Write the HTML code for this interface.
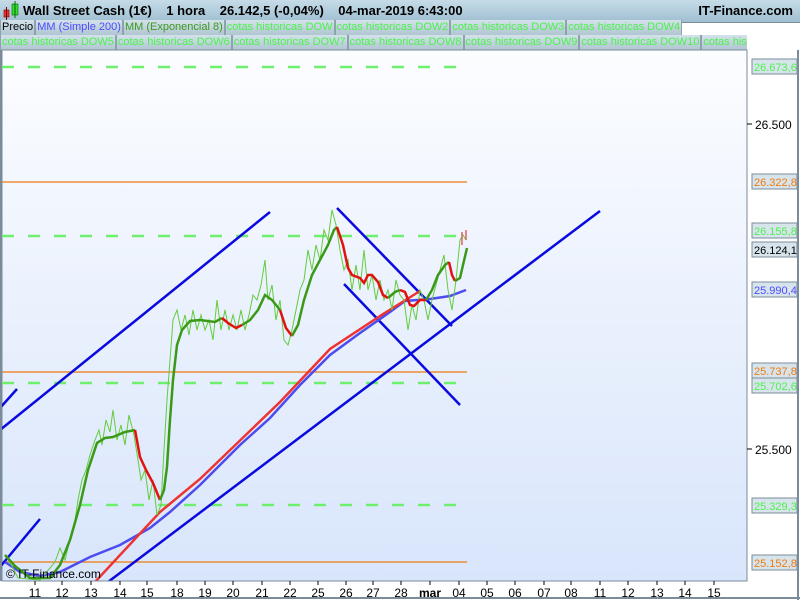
<!DOCTYPE html>
<html><head><meta charset="utf-8"><style>
body{margin:0;width:800px;height:600px;overflow:hidden;background:#fff;font-family:"Liberation Sans",sans-serif;}
.top{position:absolute;left:0;top:0;width:800px;height:22px;background:linear-gradient(#c6dce8,#9fbfd1);border-bottom:1px solid #7a8c99;}
.title{position:absolute;left:23px;top:3px;font-size:13px;font-weight:bold;color:#000;white-space:pre;}
.brand{position:absolute;right:7px;top:3px;font-size:13px;font-weight:bold;color:#000;}
.leg{position:absolute;height:15px;font-size:11px;line-height:15px;white-space:nowrap;overflow:hidden;}
.leg span{display:inline-block;background:linear-gradient(#d3e2ea,#b0c6d2);border:1px solid #8ea2ae;border-top:none;padding:0 1px;color:#4cf24c;}
</style></head><body>
<div class="top"><svg width="20" height="20" style="position:absolute;left:3px;top:1px"><rect x="1" y="9" width="5" height="7" fill="#e33" stroke="#700" stroke-width="0.6"/><line x1="3.5" y1="6" x2="3.5" y2="19" stroke="#700"/><rect x="9" y="3" width="6" height="11" fill="#3d3" stroke="#060" stroke-width="0.6"/><line x1="12" y1="0" x2="12" y2="17" stroke="#060"/></svg>
<div class="title">Wall Street Cash (1€)    1 hora    26.142,5 (-0,04%)    04-mar-2019 6:43:00</div><div class="brand">IT-Finance.com</div></div>
<div class="leg" style="left:0;top:20px;width:800px;"><span style="color:#000">Precio</span><span style="color:#4b4bff">MM (Simple 200)</span><span style="color:#3c9a1e">MM (Exponencial 8)</span><span>cotas historicas DOW</span><span>cotas historicas DOW2</span><span>cotas historicas DOW3</span><span>cotas historicas DOW4</span></div>
<div class="leg" style="left:0;top:35px;width:747px;"><span>cotas historicas DOW5</span><span>cotas historicas DOW6</span><span>cotas historicas DOW7</span><span>cotas historicas DOW8</span><span>cotas historicas DOW9</span><span>cotas historicas DOW10</span><span>cotas historicas DOW11</span></div>
<svg width="800" height="600" style="position:absolute;left:0;top:0" font-family="Liberation Sans, sans-serif" font-size="12">
<defs><linearGradient id="g" x1="0" y1="0" x2="0" y2="1"><stop offset="0" stop-color="#fcfdff"/><stop offset="1" stop-color="#d8e5fb"/></linearGradient><clipPath id="c"><rect x="2" y="50" width="745" height="531"/></clipPath></defs>
<rect x="2" y="50" width="745" height="531" fill="url(#g)" stroke="#7a8c99"/>
<line x1="0" y1="50" x2="0" y2="581" stroke="#7a8c99" stroke-width="3"/>
<g clip-path="url(#c)">
<g stroke-width="2.5">
<line x1="2" y1="67" x2="467" y2="67" stroke="#6ef06e" stroke-dasharray="12,14"/>
<line x1="2" y1="236" x2="467" y2="236" stroke="#6ef06e" stroke-dasharray="12,14"/>
<line x1="2" y1="383" x2="467" y2="383" stroke="#6ef06e" stroke-dasharray="12,14"/>
<line x1="2" y1="505" x2="467" y2="505" stroke="#6ef06e" stroke-dasharray="12,14"/>
</g>
<g stroke="#f07a10" stroke-width="1.2">
<line x1="2" y1="182" x2="467" y2="182"/><line x1="2" y1="372" x2="467" y2="372"/><line x1="2" y1="562" x2="467" y2="562"/></g>
<g stroke="#0a0ae0" stroke-width="2.5" fill="none">
<line x1="0" y1="430" x2="270" y2="212"/><line x1="0" y1="408" x2="17" y2="389"/>
<line x1="0" y1="567" x2="40" y2="519"/><line x1="108" y1="582" x2="600" y2="211"/>
<line x1="337" y1="208" x2="452" y2="326"/><line x1="344" y1="284" x2="460" y2="405"/>
</g>
<polyline fill="none" stroke="#4c4cf0" stroke-width="2.5" points="5,562 20,572 40,576 60,572 90,557 120,545 150,528 170,512 200,485 240,445 270,418 300,385 330,355 360,333 390,312 405,301 430,299 450,296 466,290"/>
<polyline fill="none" stroke="#e33" stroke-width="2.5" points="95,582 160,512 200,479 280,402 330,349 380,316 420,291"/>
<polyline fill="none" stroke="#62cc3c" stroke-width="1" points="5,555 12,566 18,578 40,580 55,562 60,548 65,560 70,540 75,520 78,500 82,480 86,470 90,455 95,440 99,430 102,445 106,420 110,432 113,410 117,440 121,425 125,445 129,415 134,435 138,460 141,480 145,470 149,500 153,480 157,515 161,505 164,450 167,400 170,360 173,320 177,310 181,330 185,315 189,335 193,310 197,330 201,315 205,330 209,320 213,340 217,300 221,330 225,310 229,330 233,315 237,330 241,310 245,330 249,315 253,295 257,300 261,285 265,260 268,300 272,285 276,320 280,300 284,340 288,345 292,330 296,310 300,290 304,280 308,250 312,270 316,245 320,260 324,230 328,240 332,210 336,225 340,250 344,270 348,260 352,290 356,265 360,290 364,250 368,290 372,275 376,300 380,280 384,300 388,290 392,310 396,280 400,295 404,300 408,330 412,305 416,320 420,290 424,300 428,320 432,300 436,285 440,270 444,255 448,290 452,310 456,280 460,240 463,235 466,240"/>
<polyline fill="none" stroke="#3a9a18" stroke-width="2.5" points="5,555 15,566 30,578 50,578 60,565 70,540 80,505 88,470 97,443 105,438 113,437 125,432 135,430"/>
<polyline fill="none" stroke="#e31010" stroke-width="2.5" points="135,430 140,457 146,470 153,483 160,500"/>
<polyline fill="none" stroke="#3a9a18" stroke-width="2.5" points="160,500 164,490 167,467 170,420 173,380 177,345 182,330 190,321 200,320 215,322 222,318"/>
<polyline fill="none" stroke="#e31010" stroke-width="2.5" points="222,318 228,323 236,328 242,325"/>
<polyline fill="none" stroke="#3a9a18" stroke-width="2.5" points="242,325 250,320 258,310 265,295 272,300 280,310"/>
<polyline fill="none" stroke="#e31010" stroke-width="2.5" points="280,310 286,328 292,336"/>
<polyline fill="none" stroke="#3a9a18" stroke-width="2.5" points="292,336 298,325 304,300 312,275 320,260 328,245 334,230 337,227"/>
<polyline fill="none" stroke="#e31010" stroke-width="2.5" points="337,227 343,245 348,268 352,275 360,278 364,283 368,275 372,275 378,282 383,295 388,298"/>
<polyline fill="none" stroke="#3a9a18" stroke-width="2.5" points="388,298 395,292 400,290"/>
<polyline fill="none" stroke="#e31010" stroke-width="2.5" points="400,290 405,292 410,305 414,306 420,300 426,300"/>
<polyline fill="none" stroke="#3a9a18" stroke-width="2.5" points="426,300 432,290 438,275 445,265 449,262"/>
<polyline fill="none" stroke="#e31010" stroke-width="2.5" points="449,262 452,275 455,281"/>
<polyline fill="none" stroke="#3a9a18" stroke-width="2.5" points="455,281 460,278 463,265 467,248"/>
<g stroke="#e06060" stroke-width="1.5"><line x1="462" y1="232" x2="462" y2="245"/><line x1="466" y1="230" x2="466" y2="240"/></g>
</g>
<text x="6" y="578" fill="#000" font-size="12">© IT-Finance.com</text>
<line x1="747" y1="50" x2="747" y2="581" stroke="#7a8c99"/>
<line x1="2" y1="581" x2="747" y2="581" stroke="#7a8c99"/>
<line x1="0" y1="598" x2="800" y2="598" stroke="#7a8c99" stroke-width="2"/>
<line x1="798" y1="50" x2="798" y2="600" stroke="#7a8c99" stroke-width="2"/>
<g stroke="#000"><line x1="747" y1="124" x2="752" y2="124"/><line x1="747" y1="449" x2="752" y2="449"/></g>
<text x="755" y="129" fill="#000">26.500</text><text x="755" y="454" fill="#000">25.500</text>
<g font-size="11">
<rect x="752" y="59" width="45" height="15" fill="#d8e4ec" stroke="#7a8c99"/><text x="754" y="71" fill="#4cf24c">26.673,6</text>
<rect x="752" y="174" width="45" height="15" fill="#d8e4ec" stroke="#7a8c99"/><text x="754" y="186" fill="#f07a10">26.322,8</text>
<rect x="752" y="223" width="45" height="15" fill="#d8e4ec" stroke="#7a8c99"/><text x="754" y="235" fill="#4cf24c">26.155,8</text>
<rect x="752" y="242" width="45" height="15" fill="#d8e4ec" stroke="#7a8c99"/><text x="754" y="254" fill="#000">26.124,1</text>
<rect x="752" y="282" width="45" height="15" fill="#d8e4ec" stroke="#7a8c99"/><text x="754" y="294" fill="#4b4bff">25.990,4</text>
<rect x="752" y="363" width="45" height="15" fill="#d8e4ec" stroke="#7a8c99"/><text x="754" y="375" fill="#f07a10">25.737,8</text>
<rect x="752" y="378" width="45" height="15" fill="#d8e4ec" stroke="#7a8c99"/><text x="754" y="390" fill="#4cf24c">25.702,6</text>
<rect x="752" y="498" width="45" height="15" fill="#d8e4ec" stroke="#7a8c99"/><text x="754" y="510" fill="#4cf24c">25.329,3</text>
<rect x="752" y="555" width="45" height="15" fill="#d8e4ec" stroke="#7a8c99"/><text x="754" y="567" fill="#f07a10">25.152,8</text>
</g>
<g fill="#000" text-anchor="middle" font-size="12">
<text x="35" y="597">11</text><text x="62" y="597">12</text><text x="91" y="597">13</text><text x="120" y="597">14</text><text x="147" y="597">15</text><text x="177" y="597">18</text><text x="205" y="597">19</text><text x="233" y="597">20</text><text x="262" y="597">21</text><text x="290" y="597">22</text><text x="318" y="597">25</text><text x="346" y="597">26</text><text x="373" y="597">27</text><text x="401" y="597">28</text><text x="430" y="597" font-weight="bold">mar</text><text x="459" y="597">04</text><text x="487" y="597">05</text><text x="515" y="597">06</text><text x="544" y="597">07</text><text x="571" y="597">08</text><text x="600" y="597">11</text><text x="628" y="597">12</text><text x="657" y="597">13</text><text x="685" y="597">14</text><text x="714" y="597">15</text>
</g>
<g stroke="#000"><line x1="35" y1="581" x2="35" y2="585"/><line x1="62" y1="581" x2="62" y2="585"/><line x1="91" y1="581" x2="91" y2="585"/><line x1="120" y1="581" x2="120" y2="585"/><line x1="147" y1="581" x2="147" y2="585"/><line x1="177" y1="581" x2="177" y2="585"/><line x1="205" y1="581" x2="205" y2="585"/><line x1="233" y1="581" x2="233" y2="585"/><line x1="262" y1="581" x2="262" y2="585"/><line x1="290" y1="581" x2="290" y2="585"/><line x1="318" y1="581" x2="318" y2="585"/><line x1="346" y1="581" x2="346" y2="585"/><line x1="373" y1="581" x2="373" y2="585"/><line x1="401" y1="581" x2="401" y2="585"/><line x1="430" y1="581" x2="430" y2="585"/><line x1="459" y1="581" x2="459" y2="585"/><line x1="487" y1="581" x2="487" y2="585"/><line x1="515" y1="581" x2="515" y2="585"/><line x1="544" y1="581" x2="544" y2="585"/><line x1="571" y1="581" x2="571" y2="585"/><line x1="600" y1="581" x2="600" y2="585"/><line x1="628" y1="581" x2="628" y2="585"/><line x1="657" y1="581" x2="657" y2="585"/><line x1="685" y1="581" x2="685" y2="585"/><line x1="714" y1="581" x2="714" y2="585"/></g>
</svg>
</body></html>
